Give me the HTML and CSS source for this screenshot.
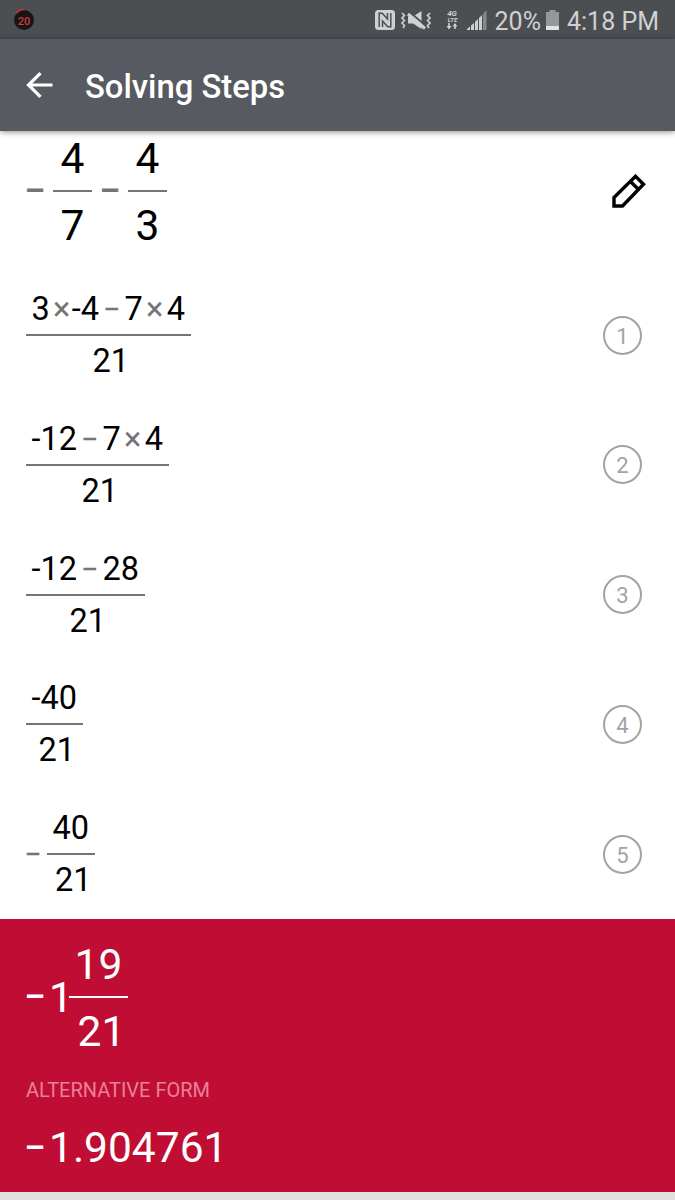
FILE: index.html
```
<!DOCTYPE html>
<html lang="en">
<head>
    <meta charset="UTF-8">
    <meta name="viewport" content="width=device-width, initial-scale=1.0">
    <title>Solving Steps</title>
    <link rel="stylesheet" href="styles.css">
</head>
<body>
    <!-- Status bar -->
    <div class="status-bar">
        <svg class="badge" viewBox="0 0 24 24" width="24" height="24">
            <circle cx="12" cy="12" r="10" fill="#171516"/>
            <path d="M4.3 5.2A10.3 10.3 0 0 1 12.5 1.5" fill="none" stroke="#d03036" stroke-width="1.6"/>
            <text x="12" y="16.5" text-anchor="middle" class="badge-text">20</text>
        </svg>
        <div class="status-icons">
            <svg class="icon-nfc" viewBox="0 0 20 20" width="20" height="20">
                <rect width="20" height="20" rx="3.5" fill="#cfd0d2"/>
                <path d="M4.2 17V3L7.5 3.5L12.5 9V3M15.8 3V17L12.5 16.5L7.5 11V17" fill="none" stroke="#4c4f52" stroke-width="1.5"/>
            </svg>
            <svg class="icon-mute" viewBox="0 0 30 20" width="30" height="20">
                <path d="M7 5.5H12L20.5 0V18L12 12.5H7Z" fill="#cfd0d2"/>
                <path d="M8 0.5L26 16" stroke="#4c4f52" stroke-width="2"/>
                <path d="M7 3L24 17.5" stroke="#cfd0d2" stroke-width="3"/>
                <path d="M1 2L3.5 4.5L1 7L3.5 9.5L1 12L3.5 14.5L2 17M29 2L26.5 4.5L29 7L26.5 9.5L29 12L26.5 14.5L28 17" fill="none" stroke="#cfd0d2" stroke-width="1.6"/>
            </svg>
            <svg class="icon-lte" viewBox="0 0 14 22" width="14" height="22">
                <text x="7" y="6.7" text-anchor="middle" class="lte-text">4G</text>
                <text x="7.5" y="13" text-anchor="middle" class="lte-text small">LTE</text>
                <path d="M4 14V18M10 20V16" stroke="#cfd0d2" stroke-width="1.6"/>
                <path d="M1.5 17H6.5L4 20.5ZM7.5 17.5H12.5L10 14Z" fill="#cfd0d2"/>
            </svg>
            <svg class="icon-signal" viewBox="0 0 20 20" width="20" height="20">
                <path d="M0 20V19L3 16.5V20ZM4 20V15.5L7 13V20ZM8 20V12L11 9V20ZM12 20V8L15 5V20Z" fill="#cfd0d2"/>
                <path d="M16 20V4L19.5 0V20Z" fill="#85878a"/>
            </svg>
            <span class="battery-level">20%</span>
            <svg class="icon-battery" viewBox="0 0 13 20" width="13" height="20">
                <path d="M0 2H3.5V0H9.5V2H13V16H0Z" fill="#95979a"/>
                <rect y="16" width="13" height="4" fill="#e2e3e4"/>
            </svg>
            <span class="time">4:18 PM</span>
        </div>
    </div>

    <!-- Header -->
    <div class="header">
        <svg class="icon-back" viewBox="0 0 27 26" width="27" height="26">
            <path d="M26.5 13H3M14.5 1.2L2.5 13L14.5 24.8" fill="none" stroke="#fff" stroke-width="3.2"/>
        </svg>
        <h1 class="title">Solving Steps</h1>
    </div>

    <!-- Expression -->
    <div class="expression large">
        <div class="math">
            <span class="sign">−</span>
            <div class="fraction"><span class="num">4</span><span class="den">7</span></div>
            <span class="sign">−</span>
            <div class="fraction"><span class="num">4</span><span class="den">3</span></div>
        </div>
        <svg class="icon-edit" viewBox="0 0 34 34" width="34" height="34">
            <path d="M2 32V23.5L23.5 2.3L31.5 10.3L10.5 32ZM18.5 7.5L26.5 15.5" fill="none" stroke="#000" stroke-width="3.4"/>
        </svg>
    </div>

    <!-- Steps -->
    <div class="steps">
        <div class="step">
            <div class="fraction"><span class="num">3<i class="times tight">×</i>-4<i class="minus">−</i>7<i class="times">×</i>4</span><span class="den">21</span></div>
            <span class="step-number">1</span>
        </div>
        <div class="step">
            <div class="fraction"><span class="num">-12<i class="minus">−</i>7<i class="times">×</i>4</span><span class="den">21</span></div>
            <span class="step-number">2</span>
        </div>
        <div class="step">
            <div class="fraction"><span class="num">-12<i class="minus">−</i>28</span><span class="den">21</span></div>
            <span class="step-number">3</span>
        </div>
        <div class="step">
            <div class="fraction"><span class="num">-40</span><span class="den">21</span></div>
            <span class="step-number">4</span>
        </div>
        <div class="step">
            <div class="math">
                <span class="sign">−</span>
                <div class="fraction"><span class="num">40</span><span class="den">21</span></div>
            </div>
            <span class="step-number">5</span>
        </div>
    </div>

    <!-- Result -->
    <div class="result large">
        <div class="math">
            <span class="sign">−</span>
            <span class="whole">1</span>
            <div class="fraction"><span class="num">19</span><span class="den">21</span></div>
        </div>
        <p class="label">ALTERNATIVE FORM</p>
        <div class="math decimal">
            <span class="sign">−</span>
            <span>1.904761</span>
        </div>
    </div>
</body>
</html>
```
FILE: styles.css
```
* {
    box-sizing: border-box;
}

body {
    margin: 0;
    height: 1200px;
    display: flex;
    flex-direction: column;
    overflow: hidden;
    background: #e0e0e0;
    color: #000;
    font-family: Roboto, sans-serif;
}

/* Status bar */
.status-bar {
    height: 39px;
    flex: none;
    display: flex;
    justify-content: space-between;
    padding: 0 16px 0 12px;
    background: #4c4f52;
    color: #cfd0d2;
    font-size: 25px;
}

.badge {
    margin-top: 8px;
}

.badge-text {
    font-size: 11px;
    font-weight: 500;
    fill: #d03a40;
}

.status-icons {
    display: flex;
    align-items: flex-start;
    line-height: 43px;
}

.icon-nfc {
    margin: 10px 6px 0 0;
}

.icon-mute {
    margin: 11px 14px 0 0;
}

.icon-lte {
    margin: 9px 8px 0 0;
}

.lte-text {
    font-size: 8px;
    font-weight: 700;
    font-style: italic;
    fill: #cfd0d2;
}

.lte-text.small {
    font-size: 6px;
}

.icon-signal {
    margin: 10px 8px 0 0;
}

.icon-battery {
    margin: 10px 8px 0 5px;
}

/* Header */
.header {
    height: 92px;
    flex: none;
    display: flex;
    align-items: center;
    padding-left: 26px;
    background: #575a60;
    color: #fff;
    box-shadow: 0 1px 6px rgba(0, 0, 0, 0.45);
    z-index: 1;
}

.title {
    margin: 3px 0 0 32px;
    font-size: 32.8px;
    font-weight: 500;
}

/* Fractions */
.math {
    display: flex;
    align-items: center;
}

.fraction {
    display: flex;
    flex-direction: column;
    text-align: center;
    font-size: 32.5px;
}

.num {
    height: 46px;
    padding: 0 5.5px;
    line-height: 42px;
}

.den {
    height: 48px;
    padding: 4px 0 0 5px;
    line-height: 42px;
    border-top: 2px solid #757575;
}

.sign {
    width: 14px;
    margin-right: 7px;
    display: flex;
    justify-content: center;
    color: #757575;
    font-size: 31px;
}

.times,
.minus {
    display: inline-block;
    width: 24px;
    color: #757575;
    font-style: normal;
}

.minus {
    width: 25.5px;
    font-size: 31px;
}

.tight {
    margin-right: -2px;
}

/* Large expressions */
.large .fraction,
.decimal {
    font-size: 42.5px;
}

.large .num {
    height: 57px;
    padding: 0 7.5px;
    line-height: 52px;
}

.large .den {
    height: 59px;
    padding: 8px 0 0;
    line-height: 51px;
}

.large .sign {
    width: 18px;
    margin-right: 9px;
    font-size: 39px;
    font-weight: 500;
}

.expression {
    height: 139px;
    flex: none;
    display: flex;
    justify-content: space-between;
    align-items: center;
    padding: 0 29px 19px 26px;
    background: #fff;
}

.expression .fraction + .sign {
    margin-left: 9px;
}

/* Steps */
.steps {
    height: 649px;
    flex: none;
    display: flex;
    flex-direction: column;
    padding-top: 0.4px;
    background: #fff;
}

.step {
    flex: 1;
    display: flex;
    justify-content: space-between;
    align-items: center;
    padding: 0 33px 0 26px;
}

.step-number {
    width: 39px;
    height: 39px;
    border: 2px solid #a3a3a5;
    border-radius: 50%;
    color: #a3a3a5;
    font-size: 22px;
    line-height: 37px;
    text-align: center;
}

/* Result */
.result {
    height: 273px;
    flex: none;
    padding: 20px 26px 0;
    background: #bf0d33;
    color: #fff;
}

.result .sign {
    margin-right: 5px;
    color: #fff;
}

.result .num {
    padding: 0 5.5px;
}

.result .den {
    padding-left: 6px;
    border-color: #fff;
}

.whole {
    width: 20px;
    font-size: 42.5px;
}

.label {
    margin: 23px 0 0;
    color: #ec8099;
    font-size: 20px;
    line-height: 24px;
}

.decimal {
    margin-top: 21px;
    line-height: 50px;
}
```
